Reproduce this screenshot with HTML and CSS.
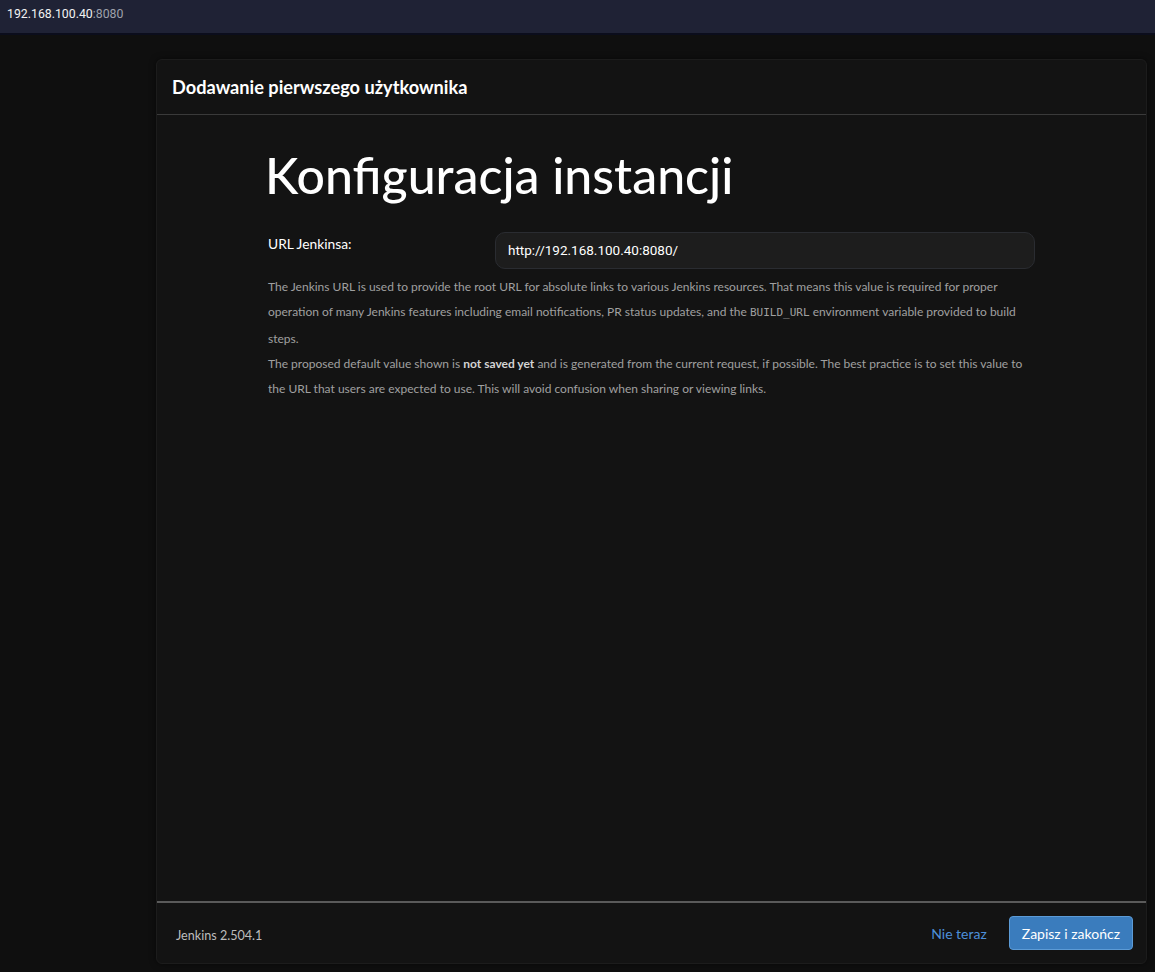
FILE: index.html
```html
<!DOCTYPE html>
<html lang="pl">
<head>
<meta charset="utf-8">
<title>Jenkins</title>
<link rel="stylesheet" href="styles.css">
</head>
<body>
<div class="topbar"><span class="host">192.168.100.40</span><span class="port">:8080</span></div>
<div class="stage">
  <div class="modal">
    <div class="modal-header">Dodawanie pierwszego użytkownika</div>
    <div class="modal-body">
      <h1 class="title">Konfiguracja instancji</h1>
      <div class="field">
        <label class="field-label">URL Jenkinsa:</label>
        <div class="field-input">http://192.168.100.40:8080/</div>
      </div>
      <div class="help">
        <p>The Jenkins URL is used to provide the root URL for absolute links to various Jenkins resources. That means this value is required for proper operation of many Jenkins features including email notifications, PR status updates, and the <code>BUILD_URL</code> environment variable provided to build steps.</p>
        <p>The proposed default value shown is <b>not saved yet</b> and is generated from the current request, if possible. The best practice is to set this value to the URL that users are expected to use. This will avoid confusion when sharing or viewing links.</p>
      </div>
    </div>
    <div class="modal-footer">
      <span class="version">Jenkins 2.504.1</span>
      <div class="actions">
        <a class="link">Nie teraz</a>
        <button class="btn-primary">Zapisz i zakończ</button>
      </div>
    </div>
  </div>
</div>
</body>
</html>
```
FILE: styles.css
```css
html, body {
  margin: 0;
  padding: 0;
  height: 100%;
}
body {
  background: #0f0f0f;
  font-family: "Lato", "Noto Sans", sans-serif;
  color: #fff;
  display: flex;
  flex-direction: column;
}
.topbar {
  height: 35px;
  box-sizing: border-box;
  background: #1f2235;
  border-bottom: 2px solid #0b0d1c;
  padding: 7px 0 0 7px;
  font-family: "Roboto", sans-serif;
  font-size: 12.3px;
}
.host { color: #f2f2f2; }
.port { color: #9ea1ab; }
.stage {
  flex: 1;
  display: flex;
  padding: 24px 8px 8px 156px;
}
.modal {
  flex: 1;
  display: flex;
  flex-direction: column;
  background: #131313;
  border: 1px solid #1c1c1c;
  border-radius: 6px;
  box-shadow: 0 0 6px rgba(0,0,0,0.5);
}
.modal-header {
  height: 55px;
  box-sizing: border-box;
  padding: 16px 15px 0;
  font-size: 18.2px;
  font-weight: 700;
  border-bottom: 1px solid #3a3a3a;
}
.modal-body {
  flex: 1;
  padding: 30px 111px 0 108px;
}
.title {
  margin: 0 0 27px;
  font-size: 50px;
  font-weight: 500;
  line-height: 1.2;
}
.field {
  display: grid;
  grid-template-columns: 230px 1fr;
  align-items: start;
}
.field-label {
  padding: 3px 0 0 3px;
  font-size: 13.8px;
}
.field-input {
  height: 37px;
  box-sizing: border-box;
  background: #1d1d1d;
  border: 1px solid #2a2c31;
  border-radius: 10px;
  padding: 9px 12px;
  font-family: "Roboto", sans-serif;
  font-size: 13.5px;
  color: #fff;
}
.help {
  padding: 5px 0 0 3px;
  font-size: 12px;
  line-height: 25.3px;
  color: #a0a0a0;
}
.help p { margin: 0; }
.help b { color: #d4d4d4; }
.help code {
  font-family: "DejaVu Sans Mono", monospace;
  font-size: 11px;
}
.modal-footer {
  height: 62px;
  box-sizing: border-box;
  border-top: 2px solid #5a5a5a;
  display: flex;
  align-items: center;
  justify-content: space-between;
  padding: 0 13px 0 19px;
}
.version {
  font-size: 12.6px;
  color: #bdbdbd;
  padding-top: 4px;
}
.actions {
  display: flex;
  align-items: center;
  gap: 22px;
}
.link {
  color: #4d8fd9;
  font-size: 14px;
}
.btn-primary {
  background: #3a7cbd;
  border: 1px solid #5c9bd6;
  border-radius: 4px;
  color: #fff;
  font-family: inherit;
  font-size: 14px;
  height: 34px;
  padding: 0 12px;
}
```
